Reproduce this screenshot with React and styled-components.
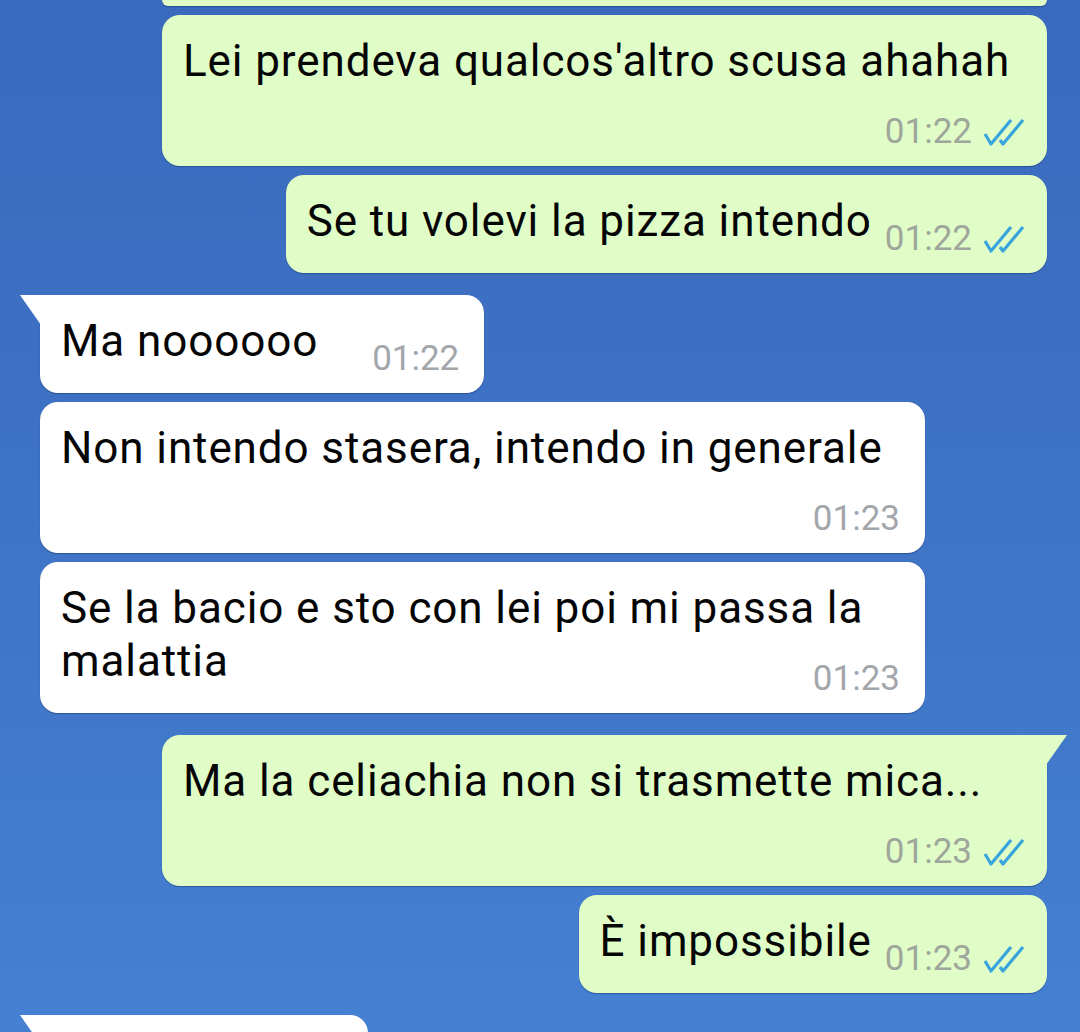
import styled, { createGlobalStyle, css } from 'styled-components'

const Global = createGlobalStyle`
  html, body {
    margin: 0;
    height: 1032px;
    overflow: hidden;
  }
  body {
    font-family: Roboto, "Noto Sans", sans-serif;
    background: linear-gradient(180deg, #3a6abd 0%, #3f74c6 55%, #4580d2 100%);
  }
`

const Chat = styled.div`
  display: flex;
  flex-direction: column;
  height: 1032px;
  overflow: hidden;
`

const Row = styled.div`
  display: flex;
  justify-content: ${({ $out }) => ($out ? 'flex-end' : 'flex-start')};
  padding: ${({ $out }) => ($out ? '0 33px 0 0' : '0 0 0 40px')};
  margin-top: ${({ $first }) => ($first ? '22px' : '9px')};
`

const Bubble = styled.div`
  position: relative;
  box-sizing: border-box;
  max-width: 885px;
  background: ${({ $out }) => ($out ? '#e0fdc7' : '#ffffff')};
  border-radius: 18px;
  box-shadow: 0 1px 1px rgba(18, 38, 90, 0.4);
  padding: ${({ $out }) => ($out ? '20px 23px 14px 21px' : '20px 25px 14px 21px')};

  ${({ $tail, $out }) =>
    $tail &&
    css`
      ${$out ? 'border-top-right-radius: 0;' : 'border-top-left-radius: 0;'}
      &::before {
        content: '';
        position: absolute;
        top: 0;
        ${$out ? 'right: -20px;' : 'left: -20px;'}
        width: 21px;
        height: 30px;
        background: inherit;
        clip-path: ${$out
          ? 'polygon(0 0, 100% 0, 0 100%)'
          : 'polygon(0 0, 100% 0, 100% 100%)'};
      }
    `}

  ${({ $block }) =>
    $block
      ? css`
          width: 885px;
          min-height: 151px;
          display: grid;
          grid-template-columns: 1fr;
        `
      : css`
          display: flex;
          align-items: flex-end;
        `}
`

const Text = styled.div`
  font-size: 44px;
  letter-spacing: 0.9px;
  line-height: 53px;
  color: #050505;
  grid-area: 1 / 1;
  align-self: start;
  margin-bottom: ${({ $inline }) => ($inline ? '11px' : '0')};
`

const Meta = styled.div`
  grid-area: 1 / 1;
  align-self: end;
  justify-self: end;
  display: flex;
  align-items: center;
  gap: 10px;
  margin-left: ${({ $gap }) => $gap || '13px'};
`

const Time = styled.span`
  font-size: 35px;
  line-height: 40px;
  color: ${({ $out }) => ($out ? '#9fa69b' : '#a3a6aa')};
`

const TopStub = styled.div`
  align-self: flex-end;
  margin-right: 33px;
  width: 885px;
  height: 6px;
  flex-shrink: 0;
  background: #e0fdc7;
  border-radius: 0 0 18px 18px;
  box-shadow: 0 1px 1px rgba(18, 38, 90, 0.4);
`

const BottomBubble = styled(Bubble)`
  width: 328px;
  height: 80px;
  flex-shrink: 0;
`

function Ticks() {
  return (
    <svg width="42" height="30" viewBox="0 0 42 30" fill="none">
      <path d="M3 17 L9 27 L29 3" stroke="#37a5dc" strokeWidth="3.2" strokeLinejoin="round" />
      <path d="M18 23 L21 27 L41 3" stroke="#37a5dc" strokeWidth="3.2" strokeLinejoin="round" />
    </svg>
  )
}

const messages = [
  { out: true, block: true, text: "Lei prendeva qualcos'altro scusa ahahah", time: '01:22' },
  { out: true, text: 'Se tu volevi la pizza intendo', time: '01:22' },
  { out: false, tail: true, first: true, text: 'Ma noooooo', time: '01:22', gap: '54px' },
  { out: false, block: true, text: 'Non intendo stasera, intendo in generale', time: '01:23' },
  { out: false, block: true, text: ['Se la bacio e sto con lei poi mi passa la', 'malattia'], time: '01:23' },
  { out: true, tail: true, first: true, block: true, text: 'Ma la celiachia non si trasmette mica...', time: '01:23' },
  { out: true, text: 'È impossibile', time: '01:23' },
]

function Message({ m }) {
  const lines = Array.isArray(m.text)
    ? m.text.map((l, i) => (
        <span key={i}>
          {i > 0 && <br />}
          {l}
        </span>
      ))
    : m.text
  return (
    <Row $out={m.out} $first={m.first}>
      <Bubble $out={m.out} $tail={m.tail} $block={m.block}>
        <Text $inline={!m.block}>{lines}</Text>
        <Meta $gap={m.gap}>
          <Time $out={m.out}>{m.time}</Time>
          {m.out && <Ticks />}
        </Meta>
      </Bubble>
    </Row>
  )
}

export default function App() {
  return (
    <>
      <Global />
      <Chat>
        <TopStub />
        {messages.map((m, i) => (
          <Message key={i} m={m} />
        ))}
        <Row $first>
          <BottomBubble $tail />
        </Row>
      </Chat>
    </>
  )
}
